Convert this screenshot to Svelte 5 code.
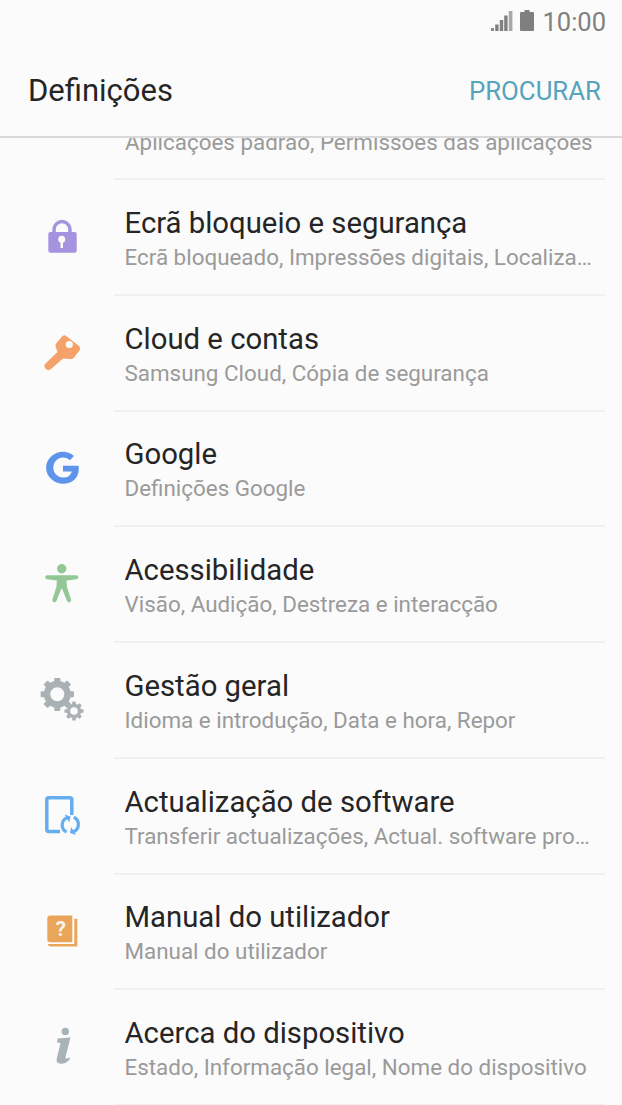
<script>
  const rows = [
    { id: 'lock', t: 'Ecrã bloqueio e segurança', s: 'Ecrã bloqueado, Impressões digitais, Localização' },
    { id: 'key', t: 'Cloud e contas', s: 'Samsung Cloud, Cópia de segurança' },
    { id: 'g', t: 'Google', s: 'Definições Google' },
    { id: 'acc', t: 'Acessibilidade', s: 'Visão, Audição, Destreza e interacção' },
    { id: 'gear', t: 'Gestão geral', s: 'Idioma e introdução, Data e hora, Repor' },
    { id: 'upd', t: 'Actualização de software', s: 'Transferir actualizações, Actual. software programada' },
    { id: 'man', t: 'Manual do utilizador', s: 'Manual do utilizador' },
    { id: 'info', t: 'Acerca do dispositivo', s: 'Estado, Informação legal, Nome do dispositivo' }
  ];
  const teeth = [0, 45, 90, 135, 180, 225, 270, 315];
</script>

<div class="screen">
  <div class="status">
    <svg class="signal" width="22" height="21" viewBox="0 0 22 21">
      <rect x="0" y="18" width="3" height="3" fill="#8c8c8c" />
      <rect x="4.200" y="14.500" width="3.400" height="6.500" fill="#808080" />
      <rect x="8.800" y="10" width="3.400" height="11" fill="#808080" />
      <rect x="13.200" y="5.500" width="3.400" height="15.500" fill="#808080" />
      <rect x="17.800" y="1" width="3.600" height="20" fill="#a8a8a8" />
    </svg>
    <svg class="batt" width="14" height="21" viewBox="0 0 14 21">
      <path d="M4.500 0h5v2H13a1 1 0 0 1 1 1v17a1 1 0 0 1-1 1H1a1 1 0 0 1-1-1V3a1 1 0 0 1 1-1h3.500z" fill="#7f7f7f" />
    </svg>
    <span class="time">10:00</span>
  </div>

  <header class="bar">
    <h1>Definições</h1>
    <span class="action">PROCURAR</span>
  </header>

  <main class="list">
    <div class="clipped">
      <div class="body">
        <p class="sub first">Aplicações padrão, Permissões das aplicações</p>
      </div>
    </div>

    {#each rows as r}
      <div class="row">
        <div class="icon">
          <svg width="48" height="48" viewBox="0 0 48 48">
            {#if r.id === 'lock'}
              <path fill="#a593e0" d="M14.300 14.500a9.700 9.700 0 0 1 19.400 0V18h-3.500v-3.500a6.200 6.200 0 0 0-12.400 0V18h-3.500z" />
              <rect x="10.300" y="17" width="28.400" height="20.700" rx="2" fill="#a593e0" />
              <circle cx="23.700" cy="24.300" r="3.500" fill="#fbfbfb" />
              <rect x="22.500" y="25" width="2.500" height="8" fill="#fbfbfb" />
            {:else if r.id === 'key'}
              <path fill="#f4a26a" d="M27.500 4.500L41 15q2 2 .5 4.500L36 26.500q-1.500 2-4 1.500l-7-.5L13 38a3.900 3.900 0 0 1-5.500-5.500L19.500 21l-2-5.500q-.5-2 1-3.500l6-7q1.500-1.300 3-.5z" />
              <circle cx="31.300" cy="13.500" r="3.600" fill="#fbfbfb" />
            {:else if r.id === 'g'}
              <path transform="translate(0 -3.300)" fill="#5e94ea" d="M25 8c4.500 0 8.200 1.600 11 4.300l-4.200 4.200c-1.800-1.700-4.100-2.600-6.800-2.600-5.400 0-9.700 4.500-9.700 10s4.300 10 9.700 10c4.700 0 7.900-2.500 8.700-6.200H25v-5.600h15.500c.2 1 .3 2 .3 3 0 9.300-6.500 14.900-15.800 14.900-8.900 0-16.900-7.100-16.900-16s8-16 16.900-16z" />
            {:else if r.id === 'acc'}
              <circle cx="23.700" cy="6.800" r="4.700" fill="#93c795" />
              <path transform="translate(-.300 -2)" fill="#93c795" d="M9.500 15.300h29c1.100 0 2 .9 2 2s-.9 2-2 2L28.800 20.500l.5 6.500 4 12.500c.4 1.200-.3 2.400-1.500 2.700-1.100.3-2.200-.3-2.600-1.400L24.500 29h-1l-4.700 11.800c-.4 1.100-1.500 1.700-2.600 1.400-1.200-.3-1.900-1.500-1.500-2.700l4-12.500.5-6.500-9.700-1.200c-1.100 0-2-.9-2-2s.9-2 2-2z" />
            {:else if r.id === 'gear'}
              <g fill="#a9b1b4">
                <circle cx="19.300" cy="16.300" r="10.250" fill="none" stroke="#a9b1b4" stroke-width="6.500" />
                {#each teeth as a}
                  <rect x="16.300" y="-.400" width="6" height="5.500" rx="1" transform="rotate({a} 19.300 16.300)" />
                {/each}
                <circle cx="36" cy="33" r="5.500" fill="none" stroke="#a9b1b4" stroke-width="3.500" />
                {#each teeth as a}
                  <rect x="34.200" y="23.500" width="3.600" height="3.500" rx=".6" transform="rotate({a} 36 33)" />
                {/each}
              </g>
            {:else if r.id === 'upd'}
              <path fill="none" stroke="#64aef0" stroke-width="3.500" stroke-linejoin="round" d="M22 37.500H10.800a2 2 0 0 1-2-2V5.800a2 2 0 0 1 2-2h21a2 2 0 0 1 2 2V21" />
              <path fill="none" stroke="#64aef0" stroke-width="3.200" d="M29.800 23.500a7.800 7.800 0 0 0-1.200 14.500M35 37.800a7.800 7.800 0 0 0 .8-14.500" />
              <path fill="#64aef0" d="M26.500 20.500l6 2-1.200 6zM38 41l-6-2 1.200-6z" />
            {:else if r.id === 'man'}
              <path fill="#e9a55a" d="M12.300 5.500H34.300V32.200H12.300a3 3 0 0 1-3-3V8.500a3 3 0 0 1 3-3z" />
              <path fill="#e9a55a" d="M36.300 8.800h3V36.500H13c-1.600 0-3-1-3.500-2.500H36.300z" />
              <text x="22.700" y="26.300" class="q">?</text>
            {:else}
              <circle cx="27.300" cy="6.400" r="3.700" fill="#a8b3b9" />
              <path fill="#a8b3b9" d="M19.500 13.500L32.500 12.500 27.500 32c-.4 1.800 1 2 2.500 1l1.200-.8.600 2c-2.600 3-5.400 4.500-8.600 4.500-3.700 0-5.200-2-4.400-5.200L22.500 18l-3.500-.5z" />
            {/if}
          </svg>
        </div>
        <div class="body">
          <p class="title">{r.t}</p>
          <p class="sub">{r.s}</p>
        </div>
      </div>
    {/each}
  </main>
</div>

<style>
  :global(body) {
    margin: 0;
    background: #fbfbfb;
  }
  .screen {
    width: 622px;
    height: 1105px;
    overflow: hidden;
    background: #fbfbfb;
    font-family: Roboto, "Liberation Sans", sans-serif;
    display: flex;
    flex-direction: column;
  }
  .status {
    height: 42px;
    box-sizing: border-box;
    padding: 2px 16px 0 0;
    display: flex;
    align-items: center;
    justify-content: flex-end;
    color: #808080;
  }
  .signal { margin: 0 7px 3px 0; }
  .batt { margin: 0 8px 3px 0; }
  .time { font-size: 25.500px; line-height: 40px; }
  .bar {
    height: 96px;
    box-sizing: border-box;
    border-bottom: 2px solid #d9d9d9;
    padding: 3px 21px 0 28px;
    display: flex;
    align-items: center;
    justify-content: space-between;
  }
  h1 {
    margin: 0;
    font-size: 31px;
    font-weight: 400;
    color: #252525;
  }
  .action {
    font-size: 25.800px;
    color: #56a3be;
  }
  .list {
    flex: 1;
    min-height: 0;
    overflow: hidden;
  }
  .clipped {
    height: 42px;
    padding-left: 114px;
    padding-right: 17px;
    display: flex;
    overflow: hidden;
  }
  .clipped .body {
    padding: 0 12px 20px 11px;
    justify-content: flex-end;
  }
  .first { font-size: 22.300px; }
  .row {
    height: 115.750px;
    padding-right: 17px;
    display: flex;
  }
  .icon {
    width: 114px;
    flex: none;
    box-sizing: border-box;
    padding: 35px 0 0 38px;
  }
  .icon svg { display: block; }
  .body {
    flex: 1;
    min-width: 0;
    box-sizing: border-box;
    border-bottom: 2px solid #f0f0f0;
    padding: 4px 12px 0 10.500px;
    display: flex;
    flex-direction: column;
    justify-content: center;
  }
  p { margin: 0; flex: none; white-space: nowrap; overflow: hidden; text-overflow: ellipsis; }
  .title {
    font-size: 29.300px;
    line-height: 37px;
    color: #252525;
  }
  .sub {
    font-size: 22.400px;
    line-height: 31px;
    color: #9a9a9a;
  }
  .q {
    font-family: Roboto, sans-serif;
    font-weight: 700;
    font-size: 21px;
    fill: #fbf3e8;
    text-anchor: middle;
  }
</style>
